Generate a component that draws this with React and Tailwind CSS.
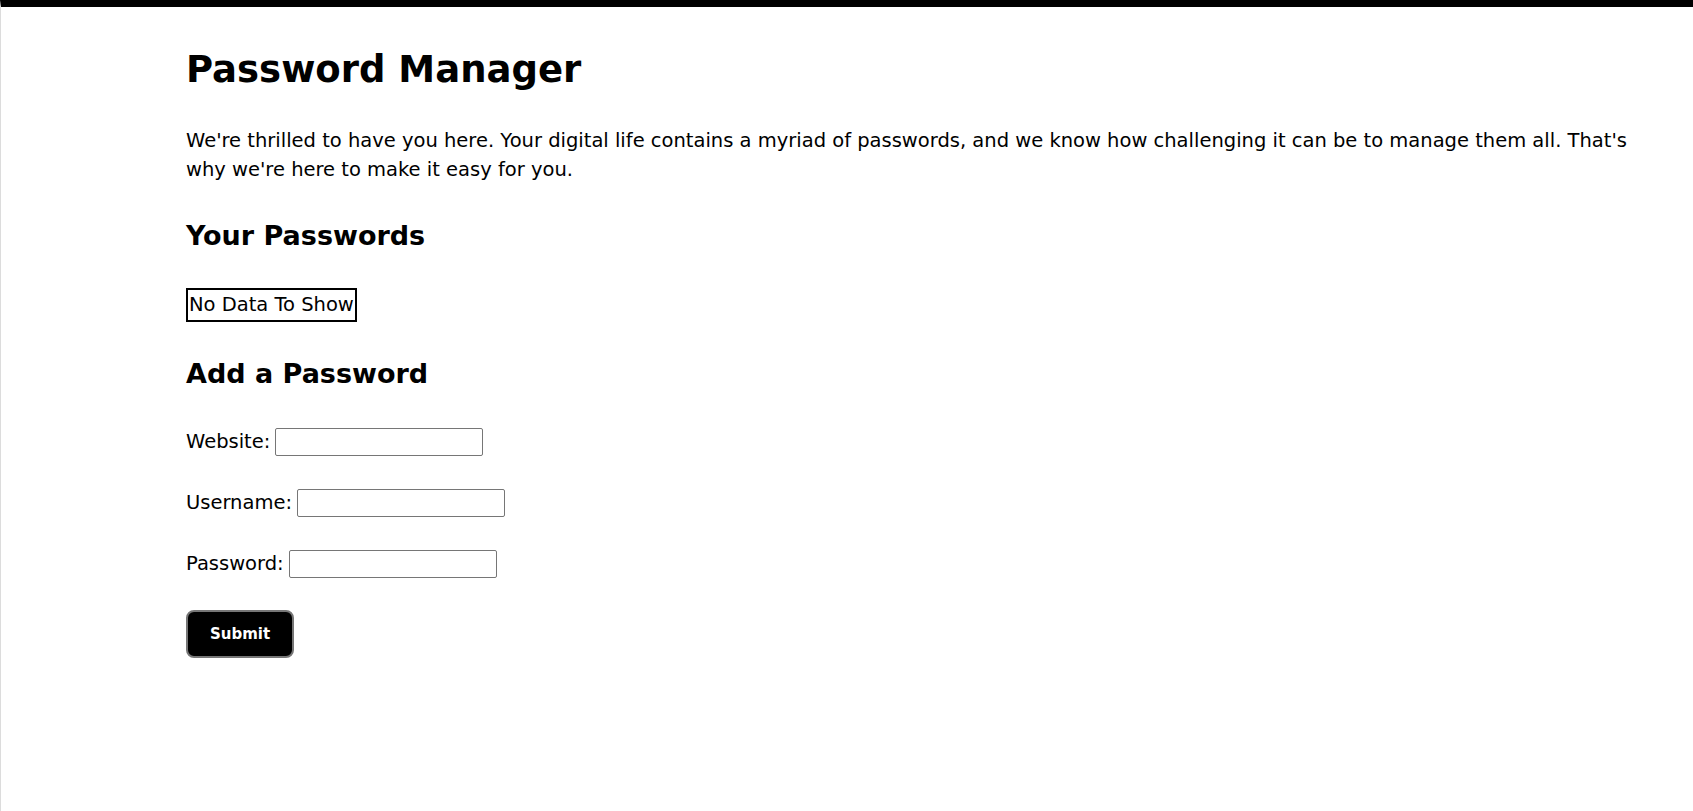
import { useState } from "react"

export default function App() {
  const [form, setForm] = useState({ website: "", username: "", password: "" })

  const handleChange = (field, value) => {
    setForm({ ...form, [field]: value })
  }

  return (
    <div
      className="min-h-[811px] border-t-[7px] border-l border-t-black border-l-[#dcdcdc] bg-white text-black pl-[185px] pr-[40px]"
      style={{ fontFamily: '"DejaVu Sans", "Open Sans", sans-serif' }}
    >
      <h1 className="pt-[39px] text-[37px] leading-[48px] font-semibold">Password Manager</h1>

      <p className="mt-[32px] text-[19.5px] leading-[29px]">
        We're thrilled to have you here. Your digital life contains a myriad of passwords, and we know how
        challenging it can be to manage them all. That's why we're here to make it easy for you.
      </p>

      <h2 className="mt-[34px] text-[27px] leading-[36px] font-semibold">Your Passwords</h2>

      <div className="mt-[34px] inline-block border-2 border-black px-px text-[19.5px] leading-[30px]">No Data To Show</div>

      <h2 className="mt-[34px] text-[27px] leading-[36px] font-semibold">Add a Password</h2>

      <form onSubmit={(e) => e.preventDefault()} className="text-[19.5px]">
        {[
          ["Website", "website", "text"],
          ["Username", "username", "text"],
          ["Password", "password", "password"],
        ].map(([label, field, type], idx) => (
          <div key={field} className={idx === 0 ? "mt-[36px] flex items-center" : "mt-[33px] flex items-center"}>
            <label htmlFor={field} className="leading-[28px]">
              {label}:
            </label>
            <input
              id={field}
              type={type}
              value={form[field]}
              onChange={(e) => handleChange(field, e.target.value)}
              className="ml-[5px] w-[208px] h-[28px] border border-[#767676] rounded-[2px] px-1 outline-none"
            />
          </div>
        ))}

        <button
          type="submit"
          className="mt-[32px] w-[108px] h-[48px] bg-black text-white font-bold text-[15px] rounded-[8px] border-2 border-[#767676]"
        >
          Submit
        </button>
      </form>
    </div>
  )
}
